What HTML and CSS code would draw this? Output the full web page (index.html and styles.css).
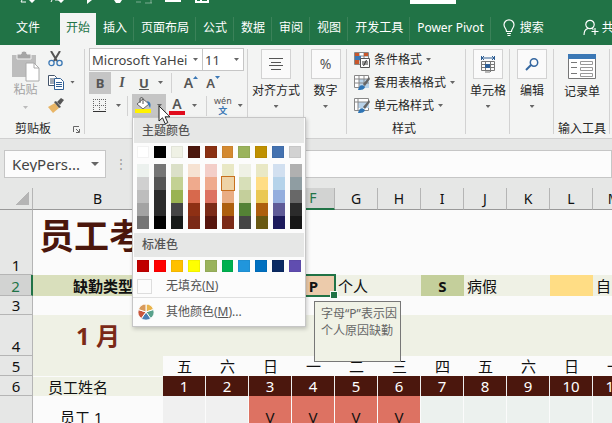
FILE: index.html
```html
<!DOCTYPE html>
<html lang="zh-CN">
<head>
    <meta charset="UTF-8">
    <meta name="viewport" content="width=device-width, initial-scale=1.0">
    <title>员工考勤</title>
    <link rel="stylesheet" href="styles.css">
</head>
<body>
    <header>
        <div class="title-bar">
            <svg class="quick-icons" width="212" height="4" viewBox="0 0 212 4" fill="none" stroke="#fff">
                <path d="M22 0l-1 2h5M52 0l-1 2M55 0h4M61 0v2"/>
                <path d="M29 0h6l-3 3zM58 0h6l-3 3zM87 0h5l-5 4zM114 0h8l-2 3h-4z" fill="#fff" stroke="none"/>
                <path d="M136 2h5M145 3h7M151 0v3" opacity=".4"/>
                <path d="M165 1h16M196 0v2h12V0M201 0v2" stroke-width="2"/>
            </svg>
            <span class="user-box"></span>
        </div>
        <nav class="tabs">
            <a href="#" class="file">文件</a>
            <a href="#" class="active">开始</a>
            <a href="#">插入</a>
            <a href="#">页面布局</a>
            <a href="#">公式</a>
            <a href="#">数据</a>
            <a href="#">审阅</a>
            <a href="#">视图</a>
            <a href="#">开发工具</a>
            <a href="#">Power Pivot</a>
            <a href="#" class="search">
                <svg width="12" height="18" viewBox="0 0 12 18" fill="none" stroke="#fff" stroke-width="1.2"><path d="M3.5 12.5C3.5 9.500 1 9 1 5.800a5 5 0 0 1 10 0c0 3.200-2.500 3.700-2.500 6.700zM4 14.500h4M4.500 16.500h3"/></svg>
                搜索
            </a>
            <a href="#" class="share">
                <svg width="16" height="18" viewBox="0 0 16 18" fill="none" stroke="#fff" stroke-width="1.200"><circle cx="7" cy="5.500" r="4.200"/><path d="M1 16c0-4 2-6 4-6.500M9 9.500l1.500 1M12 9v7M8.500 12.500h7"/></svg>
                共享
            </a>
        </nav>
    </header>

    <section class="ribbon">
        <div class="group clipboard">
            <div class="clip-main">
                <button class="paste">
                    <svg width="29" height="31" viewBox="0 0 29 31"><path d="M1 4h24v22H1z" fill="#bdbdbd"/><path d="M6 3h4c0-4 6-4 6 0h4v5H6z" fill="#a5a5a5" stroke="#f3f3f3"/><path d="M15 12h8l5 5v13H15z" fill="#fff" stroke="#aaa"/><path d="M23 12v5h5" fill="none" stroke="#aaa"/></svg>
                    <span>粘贴</span>
                    <i class="arrow"></i>
                </button>
                <div class="clip-side">
                    <button aria-label="剪切"><svg width="15" height="16" viewBox="0 0 15 16" fill="none"><path d="M3 0l6 10M12 0L6 10" stroke="#555" stroke-width="2"/><circle cx="3.500" cy="12" r="2.600" stroke="#3b78b5" stroke-width="1.300"/><circle cx="11.500" cy="12" r="2.600" stroke="#3b78b5" stroke-width="1.300"/></svg></button>
                    <button aria-label="复制"><svg width="16" height="15" viewBox="0 0 16 15" fill="#fff" stroke="#44546a"><path d="M.5.5h6l2 2v8h-8zM2 4h4M2 6h4M2 8h4"/><path d="M6.500 3.500h6l3 3v8h-9zM8 7.500h6M8 9.500h6M8 11.500h6" stroke="#2f5f95"/></svg><i class="arrow"></i></button>
                    <button aria-label="格式刷"><svg width="16" height="15" viewBox="0 0 16 15"><path d="M0 9l7-4 4 5-6 5z" fill="#e8b566"/><path d="M6 4l2-1 5 6-2 1z" fill="#555"/><path d="M9 4l4-4 3 2-4 5z" fill="#555"/></svg></button>
                </div>
            </div>
            <div class="caption">剪贴板<svg width="7" height="7" viewBox="0 0 7 7" fill="none" stroke="#666"><path d="M.5 6V.5H6M3 3l3 3M6.500 3v3.500H3"/></svg></div>
        </div>

        <div class="group font">
            <div class="font-row combos">
                <span class="combo name"><select aria-label="字体"><option>Microsoft YaHei</option></select><i class="arrow"></i></span>
                <span class="combo size"><select aria-label="字号"><option>11</option></select><i class="arrow"></i></span>
            </div>
            <div class="font-row">
                <button class="letter bold on">B</button>
                <button class="letter italic">I</button>
                <button class="letter underline">U</button>
                <i class="arrow after-u"></i>
                <i class="split"></i>
                <button class="letter grow">A<svg width="5" height="3"><path d="M0 3h5L2.500 0z" fill="#3b78b5"/></svg></button>
                <button class="letter shrink">A<svg width="5" height="3"><path d="M0 0h5L2.500 3z" fill="#3b78b5"/></svg></button>
            </div>
            <div class="font-row">
                <button class="borders" aria-label="边框"><svg width="14" height="14" viewBox="0 0 14 14" fill="none" stroke="#666"><path d="M0 .5h13M0 6.500h13M.5 0v12M6.500 0v12M12.500 0v12" stroke-dasharray="1 1"/><path d="M0 12.500h13" stroke="#333"/></svg><i class="arrow"></i></button>
                <i class="split"></i>
                <div class="fill-wrap">
                    <button class="fill" aria-label="填充颜色"><svg width="18" height="17" viewBox="0 0 18 17"><path d="M3 7l6-5 6 5-6 5z" fill="#fff" stroke="#666"/><path d="M6 6V2c0-2 3-2 3 0v5" fill="none" stroke="#555"/><path d="M13 4c4 1 4 4 3 7l-2-4z" fill="#3b78b5"/><path d="M1 12h16v4H1z" fill="#fff200"/></svg><i class="arrow"></i></button>
                    <svg class="pointer" width="13" height="20" viewBox="0 0 13 20"><path d="M1 1v15l3.500-3.200 2.700 6 2.600-1.200-2.700-5.800H12z" fill="#fff" stroke="#222"/></svg>
                    <div class="menu">
                        <h3>主题颜色</h3>
                        <div class="swatches" id="theme"></div>
                        <div class="swatches shades" id="shades"></div>
                        <h3 class="standard-title">标准色</h3>
                        <div class="swatches" id="standard"></div>
                        <button class="menu-item"><i class="no-fill"></i><span>无填充(<u>N</u>)</span></button>
                        <button class="menu-item more"><svg width="16" height="16" viewBox="-8 -8 16 16" stroke="#fff"><path d="M0 0V-8A8 8 0 0 1 7.600-2.500z" fill="#e9b44c"/><path d="M0 0L7.600-2.500A8 8 0 0 1 4.700 6.500z" fill="#59a18c"/><path d="M0 0L4.700 6.500A8 8 0 0 1-4.700 6.500z" fill="#4b80b4"/><path d="M0 0L-4.700 6.500A8 8 0 0 1-7.600-2.500z" fill="#c9563c"/><path d="M0 0L-7.600-2.500A8 8 0 0 1 0-8z" fill="#d89a5b"/></svg><span>其他颜色(<u>M</u>)...</span></button>
                    </div>
                </div>
                <button class="letter color">A</button>
                <i class="arrow"></i>
                <i class="split"></i>
                <button class="phonetic"><span>wén</span><b>文</b></button>
                <i class="arrow"></i>
            </div>
        </div>

        <div class="group big align">
            <button><span class="tile"><svg width="14" height="12" viewBox="0 0 14 12" stroke="#555"><path d="M0 .5h14M2 4.500h10M0 7.500h14M2 11.500h10"/></svg></span>对齐方式<i class="arrow"></i></button>
        </div>
        <div class="group big number">
            <button><span class="tile">%</span>数字<i class="arrow"></i></button>
        </div>

        <div class="group styles">
            <button><svg width="16" height="16" viewBox="0 0 16 16"><path d="M.5.5h14v12H.5z" fill="#fff" stroke="#888"/><path d="M5 0v12M10 0v6M0 4h15M0 8h6" stroke="#888"/><path d="M1 1h4v3H1zM10 1h4v3h-4z" fill="#c8562b"/><path d="M1 4h6v4H1z" fill="#3b78b5"/><path d="M1 8h4v4H1z" fill="#c8562b"/><path d="M6.500 6.500h9v9h-9z" fill="#fff" stroke="#555"/><path d="M8 10h6M8 12h6M12.500 8l-3 6" stroke="#333"/></svg>条件格式<i class="arrow"></i></button>
            <button><svg width="16" height="16" viewBox="0 0 16 16"><path d="M.5.5h14v12H.5z" fill="#fff" stroke="#888"/><path d="M5 4h10v9H5z" fill="#b9d3ea"/><path d="M5 0v12M10 0v12M0 4h15M0 8h15" stroke="#888"/><path d="M15 2l1 2-5 7-2-2z" fill="#666"/><path d="M4 15c1-5 4-6 7-3-1 3-4 3-7 3z" fill="#2f75b5"/></svg>套用表格格式<i class="arrow"></i></button>
            <button><svg width="16" height="16" viewBox="0 0 16 16"><path d="M.5.5h14v12H.5z" fill="#fff" stroke="#888"/><path d="M4 4h11v6H4z" fill="#b9d3ea"/><path d="M4 0v12M0 4h15" stroke="#888"/><path d="M15 2l1 2-5 7-2-2z" fill="#666"/><path d="M4 15c1-5 4-6 7-3-1 3-4 3-7 3z" fill="#2f75b5"/></svg>单元格样式<i class="arrow"></i></button>
            <div class="caption">样式</div>
        </div>

        <div class="group big cells">
            <button><span class="tile"><svg width="16" height="17" viewBox="0 0 16 17" fill="none"><path d="M1.500 0v4M14.500 0v4M2 2h12M4 0L2 2l2 2M12 0l2 2-2 2" stroke="#2f5f95"/><path d="M1.500 5.500h13v9h-13zM1 8.500h14M1 11.500h14M5.500 5v10M10.500 5v10" stroke="#777"/><path d="M5 8h5v4H5z" fill="#2f5f95"/><path d="M5 16h5l2-2" stroke="#777"/></svg></span>单元格<i class="arrow"></i></button>
        </div>
        <div class="group big edit">
            <button><span class="tile"><svg width="14" height="13" viewBox="0 0 14 13" fill="none" stroke="#3567a0" stroke-width="1.500"><circle cx="9" cy="4.500" r="3.700"/><path d="M6 7l-5 5" stroke-width="2"/></svg></span>编辑<i class="arrow"></i></button>
        </div>
        <div class="group big input-tools">
            <button><svg width="28" height="25" viewBox="0 0 28 25"><path d="M.5.5h27v24H.5z" fill="#fff" stroke="#777"/><path d="M0 0h28v5H0z" fill="#3b78b5"/><path d="M3 8.500h6M3 13.500h6M3 19.500h6" stroke="#777"/><path d="M12.500 7.500h12v3h-12zM12.500 13.500h12v3h-12zM12.500 19.500h12v3h-12z" fill="none" stroke="#999"/></svg>记录单</button>
            <div class="caption">输入工具</div>
        </div>
    </section>

    <section class="formula-bar">
        <div class="name-box"><input type="text" value="KeyPers..." aria-label="名称框" readonly><i class="arrow"></i></div>
        <span class="dots">⋮</span>
        <input class="formula" type="text" aria-label="编辑栏">
    </section>

    <main class="sheet">
        <table>
            <colgroup><col class="col-head"><col class="col-b"><col span="11" class="col-day"></colgroup>
            <thead>
                <tr><th class="corner"></th><th>B</th><th>C</th><th>D</th><th>E</th><th class="current">F</th><th>G</th><th>H</th><th>I</th><th>J</th><th>K</th><th>L</th><th>M</th></tr>
            </thead>
            <tbody>
                <tr class="r1"><th>1</th><td colspan="12" class="sheet-title">员工考</td></tr>
                <tr class="r2"><th class="current">2</th><td class="type-label">缺勤类型</td><td colspan="3"></td>
                    <td class="code selected">P<span class="note">字母“P”表示因<br>个人原因缺勤</span></td><td colspan="2">个人</td>
                    <td class="code sick">S</td><td colspan="2">病假</td><td class="other"></td><td>自</td></tr>
                <tr class="r3"><th>3</th><td colspan="12"></td></tr>
                <tr class="r4"><th>4</th><td class="month">1 月</td><td colspan="11"></td></tr>
                <tr class="r5"><th>5</th><td class="tint"></td><td>五</td><td>六</td><td>日</td><td>一</td><td>二</td><td>三</td><td>四</td><td>五</td><td>六</td><td>日</td><td>一</td></tr>
                <tr class="r6"><th>6</th><td class="names">员工姓名</td><td>1</td><td>2</td><td>3</td><td>4</td><td>5</td><td>6</td><td>7</td><td>8</td><td>9</td><td>10</td><td>11</td></tr>
                <tr class="r7"><th>7</th><td class="employee">员工 1</td><td class="gray"></td><td class="gray"></td><td class="off">V</td><td class="off">V</td><td class="off">V</td><td class="off">V</td><td></td><td></td><td></td><td></td><td></td></tr>
            </tbody>
        </table>
    </main>
    <script src="script.js"></script>
</body>
</html>
```
FILE: styles.css
```css
* {
    box-sizing: border-box;
}
body {
    margin: 0;
    overflow: hidden;
    background-color: #fbfbfb;
    color: #262626;
    font-family: "Noto Sans", "Noto Sans CJK SC", sans-serif;
    font-size: 12px;
    line-height: 16px;
}
button, input, select {
    font: inherit;
    color: inherit;
    border: 0;
    padding: 0;
    margin: 0;
    background: none;
}
svg {
    flex: none;
}
.arrow {
    flex: none;
    width: 5px;
    height: 3px;
    background-color: #666;
    clip-path: polygon(0 0, 100% 0, 50% 100%);
}

/* title and tabs */
header {
    background-color: #217346;
    color: #fff;
}
.title-bar {
    display: flex;
    height: 13px;
}
.user-box {
    width: 46px;
    height: 4px;
    margin-left: 198px;
    background-color: #fff;
}
.tabs {
    display: flex;
    height: 32px;
    overflow: hidden;
}
.tabs a {
    flex: none;
    display: flex;
    align-items: center;
    padding: 0 7px 2px;
    color: #fff;
    text-decoration: none;
    white-space: nowrap;
    background: linear-gradient(#3b8259, #3b8259) right center / 1px 24px no-repeat;
}
.tabs .file {
    padding: 0 20px 2px 16px;
    background: none;
}
.tabs .active {
    padding: 0 6px 2px;
    background: #f3f4f3;
    color: #217346;
}
.tabs .search, .tabs .share {
    gap: 5px;
    padding-left: 12px;
    background: none;
}
.tabs .share {
    margin-left: 20px;
    gap: 3px;
}

/* ribbon */
.ribbon {
    display: flex;
    height: 94px;
    background-color: #f3f4f3;
    border-bottom: 1px solid #d0d0d0;
}
.group {
    flex: none;
    position: relative;
    display: flex;
    flex-direction: column;
}
.group::after {
    content: "";
    position: absolute;
    right: 0;
    top: 4px;
    bottom: 4px;
    width: 1px;
    background-color: #d2d2d2;
}
.group button {
    display: flex;
    align-items: center;
    white-space: nowrap;
}
.caption {
    margin-top: auto;
    padding-bottom: 1px;
    text-align: center;
}
.clipboard {
    width: 85px;
}
.clip-main {
    display: flex;
    gap: 8px;
    padding: 6px 0 0 11px;
}
.group .paste {
    flex-direction: column;
    justify-content: flex-start;
    width: 29px;
    color: #a3a3a3;
}
.paste .arrow {
    margin-top: 8px;
    background-color: #bbb;
}
.clip-side {
    display: flex;
    flex-direction: column;
    gap: 7px;
}
.clip-side button {
    height: 16px;
    gap: 6px;
}
.clipboard .caption {
    display: flex;
    align-items: center;
    gap: 22px;
    padding-left: 15px;
}
.font {
    width: 163px;
    padding: 3px 4px 0;
}
.font-row {
    display: flex;
    align-items: center;
    height: 23px;
}
.combo {
    display: flex;
    align-items: center;
    height: 23px;
    padding: 0 4px 0 2px;
    background-color: #fff;
    border: 1px solid #c6c6c6;
    color: #444;
    font-size: 13px;
}
.combo select {
    flex: 1;
    min-width: 0;
    appearance: none;
}
.combo.name {
    width: 114px;
}
.combo.size {
    width: 41px;
    border-left: 0;
}
.group .letter {
    justify-content: center;
    width: 22px;
    height: 22px;
    color: #555;
    font-size: 13px;
}
.letter.on {
    background-color: #c5c5c5;
}
.letter.bold, .letter.underline {
    font-weight: bold;
}
.letter.italic {
    font-family: "Liberation Serif", serif;
    font-style: italic;
    font-weight: bold;
    font-size: 14px;
}
.letter.underline {
    text-decoration: underline;
}
.after-u {
    margin: 0 8px 0 3px;
}
.split {
    width: 1px;
    height: 20px;
    background-color: #d2d2d2;
}
.group .grow {
    margin-left: 8px;
    font-size: 14px;
    font-weight: 600;
}
.group .shrink {
    font-weight: 600;
}
.letter svg {
    align-self: flex-start;
    margin-top: 4px;
}
.borders {
    width: 38px;
    gap: 9px;
    padding-left: 4px;
}
.fill-wrap {
    position: relative;
    margin-left: 4px;
}
.group .fill {
    width: 34px;
    height: 23px;
    gap: 5px;
    padding-left: 2px;
    background-color: #c5c5c5;
}
.pointer {
    position: absolute;
    left: 26px;
    top: 11px;
    z-index: 3;
}
.group .color {
    width: 16px;
    height: 19px;
    margin: 0 7px 0 3px;
    border-bottom: 4px solid #e00b1c;
    font-size: 14px;
    font-weight: 600;
    line-height: 14px;
}
.color ~ .split {
    margin-left: 9px;
}
.group .phonetic {
    flex-direction: column;
    margin: 0 6px 0 7px;
    color: #555;
    font-size: 9px;
    line-height: 10px;
}
.phonetic b {
    color: #3b78b5;
}

/* fill colour menu */
.menu {
    position: absolute;
    left: 0;
    top: 23px;
    z-index: 2;
    width: 174px;
    background-color: #fcfcfc;
    border: 1px solid #c6c6c6;
    box-shadow: 1px 2px 4px rgba(0, 0, 0, 0.2);
    color: #555;
}
.menu h3 {
    margin: 0 1px;
    padding: 5px 8px 4px;
    background-color: #e6e7e6;
    font-size: 12px;
    font-weight: 500;
}
.menu .standard-title {
    padding-top: 4px;
}
.swatches {
    display: flex;
    gap: 5px;
    padding: 3px 4px 5px;
}
.swatches .strip {
    width: 12px;
}
.swatches button {
    width: 12px;
    height: 12px;
    border: 1px solid rgba(0, 0, 0, 0.05);
}
.shades {
    padding: 1px 4px 4px;
}
.shades button {
    height: 13px;
    border: 0;
}
.shades .picked {
    outline: 1px solid #c8701e;
}
#standard {
    padding-bottom: 3px;
}
.menu .menu-item {
    width: 100%;
    height: 22px;
    gap: 14px;
    padding-left: 4px;
}
.menu .more {
    height: 29px;
    gap: 12px;
    padding-left: 5px;
    border-top: 1px solid #e0e0e0;
}
.no-fill {
    width: 15px;
    height: 15px;
    border: 1px solid #ddd;
}

/* large ribbon buttons */
.big > button {
    flex-direction: column;
    padding-top: 4px;
}
.tile {
    display: flex;
    align-items: center;
    justify-content: center;
    width: 30px;
    height: 30px;
    margin-bottom: 4px;
    background-color: #fafafa;
    border: 1px solid #d2d2d2;
    color: #555;
    font-size: 14px;
}
.big .arrow {
    margin-top: 6px;
}
.align {
    width: 56px;
}
.number {
    width: 43px;
}
.styles {
    width: 119px;
    padding: 3px 0 0 7px;
}
.styles button {
    height: 23px;
    gap: 4px;
}
.styles .caption {
    padding-right: 12px;
}
.cells, .edit {
    width: 44px;
}
.input-tools {
    width: 56px;
}
.input-tools > button {
    gap: 5px;
    padding-top: 9px;
}

/* formula bar */
.formula-bar {
    display: flex;
    height: 49px;
    padding-top: 11px;
    background-color: #e6e7e6;
}
.name-box {
    display: flex;
    align-items: center;
    width: 102px;
    height: 28px;
    margin-left: 4px;
    padding: 0 6px 0 7px;
    background-color: #fcfcfc;
    border: 1px solid #c6c6c6;
    color: #444;
    font-size: 15px;
}
.name-box input {
    flex: 1;
    min-width: 0;
}
.name-box .arrow {
    width: 8px;
    height: 4px;
}
.dots {
    width: 30px;
    padding-top: 6px;
    text-align: center;
    color: #999;
}
.formula {
    flex: 1;
    height: 28px;
    background-color: #fcfcfc;
    border: 1px solid #c6c6c6;
}

/* sheet */
.sheet {
    overflow: hidden;
}
table {
    width: 636px;
    table-layout: fixed;
    border-collapse: separate;
    border-spacing: 0;
    font-size: 15px;
    line-height: 18px;
    color: #111;
}
.col-head {
    width: 33px;
}
.col-b {
    width: 130px;
}
.col-day {
    width: 43px;
}
th, td {
    padding: 0;
    white-space: nowrap;
}
th {
    font-weight: normal;
    background-color: #e6e7e6;
    border-right: 1px solid #b5b5b5;
    border-bottom: 1px solid #b5b5b5;
}
thead th {
    height: 22px;
    border-bottom-color: #999;
    font-size: 14px;
}
tbody th {
    vertical-align: bottom;
}
thead .corner {
    background: linear-gradient(135deg, transparent 50%, #b5b5b5 50%) 16px 4px / 13px 13px no-repeat #e6e7e6;
}
thead .current {
    background-color: #d2d3d2;
    border-bottom: 2px solid #217346;
    color: #217346;
}
tbody .current {
    background-color: #d2d3d2;
    border-right: 2px solid #217346;
    color: #217346;
}
.r1 > * {
    height: 65px;
}
.sheet-title {
    padding: 0 0 14px 6px;
    color: #4b170d;
    font-size: 35px;
    font-weight: bold;
    line-height: 40px;
}
.r2 > * {
    height: 21px;
}
.r2 td {
    padding-left: 3px;
    background-color: #eff1e5;
}
.r2 .type-label {
    padding: 0 0 0 10px;
    background-color: #d9dfbc;
    font-weight: bold;
    text-align: center;
}
.r2 .code {
    position: relative;
    padding: 0;
    font-weight: bold;
    text-align: center;
}
.r2 .selected {
    background-color: #eccbab;
    outline: 2px solid #217346;
    outline-offset: -1px;
}
.selected::after {
    content: "";
    position: absolute;
    right: -3px;
    bottom: -3px;
    width: 6px;
    height: 6px;
    background-color: #217346;
    border: 1px solid #fbfbfb;
}
.r2 .sick {
    background-color: #c4cf9b;
}
.r2 .other {
    background-color: #ffdd85;
}
.note {
    position: absolute;
    left: 22px;
    top: 26px;
    z-index: 1;
    height: 61px;
    padding: 3px 3px 0 6px;
    background-color: #f0f2e6;
    border: 1px solid #777;
    color: #666;
    font-size: 12px;
    font-weight: normal;
    line-height: 17px;
    text-align: left;
}
.r3 > * {
    height: 19px;
}
.r4 > * {
    height: 41px;
}
.r4 td, .tint, .r6 .names {
    background-color: #eff1e5;
}
.month {
    color: #7b2a17;
    font-size: 24px;
    font-weight: bold;
    line-height: 30px;
    text-align: center;
}
.r5 > *, .r6 > * {
    height: 20px;
}
.r5 td, .r6 td, .r7 td {
    text-align: center;
}
.r6 td {
    background-color: #4b170d;
    border-right: 1px solid #eee;
    color: #fff;
}
.r6 .names {
    padding-left: 15px;
    border-right: 0;
    border-top: 1px solid #fbfbfb;
    color: #111;
    text-align: left;
}
.r7 > * {
    height: 42px;
}
.r7 td {
    background-color: #ecf1ee;
    border-right: 1px solid #fbfbfb;
}
.r7 .employee {
    padding-left: 27px;
    background-color: #fbfbfb;
    text-align: left;
}
.r7 .gray {
    background-color: #f0f0f0;
}
.r7 .off {
    background-color: #dd7262;
}
```
FILE: script.js
```js
var theme = ["#ffffff", "#000000", "#eff1e5", "#4b170d", "#8a3012", "#d48a31", "#9ab35c", "#bf9000", "#4472b0", "#d2d2d2"];
var standard = ["#c00000", "#ff0000", "#ffc000", "#ffff00", "#9ab35c", "#00b050", "#2196dc", "#0070c0", "#0b2a63", "#604db0"];
var shades = [
    ["#ecf1ee", "#d0d0d0", "#bdbdbd", "#a3a3a3", "#757575"],
    ["#757575", "#555555", "#2b2b2b", "#2b2b2b", "#000000"],
    ["#dbe0c8", "#c3d193", "#9ab352", "#454545", "#171a18"],
    ["#f6e2d2", "#efaa8d", "#d7694d", "#8e3014", "#7b2a17"],
    ["#f3cec8", "#efaa8d", "#dd7262", "#7b2a17", "#56140c"],
    ["#e9e8c5", "#eed3a6", "#e9ad83", "#ad5f0e", "#7b2a17"],
    ["#eff1e5", "#d7dfb8", "#c4cf9b", "#548235", "#454545"],
    ["#e9e8c5", "#ffdd85", "#eac855", "#ad5f0e", "#685812"],
    ["#d2e0f0", "#b5d3ea", "#94aede", "#5f5b98", "#1c1a5c"],
    ["#b0b0b0", "#8f9da2", "#686868", "#2b2b2b", "#171717"]
];

function addSwatch(parent, color) {
    var button = document.createElement("button");
    button.style.backgroundColor = color;
    button.setAttribute("aria-label", color);
    parent.appendChild(button);
    return button;
}

theme.forEach(color => addSwatch(document.getElementById("theme"), color));
standard.forEach(color => addSwatch(document.getElementById("standard"), color));
shades.forEach((column, i) => {
    var strip = document.createElement("div");
    strip.className = "strip";
    column.forEach((color, j) => {
        var button = addSwatch(strip, color);
        if (i === 5 && j === 1) button.className = "picked";
    });
    document.getElementById("shades").appendChild(strip);
});
```
